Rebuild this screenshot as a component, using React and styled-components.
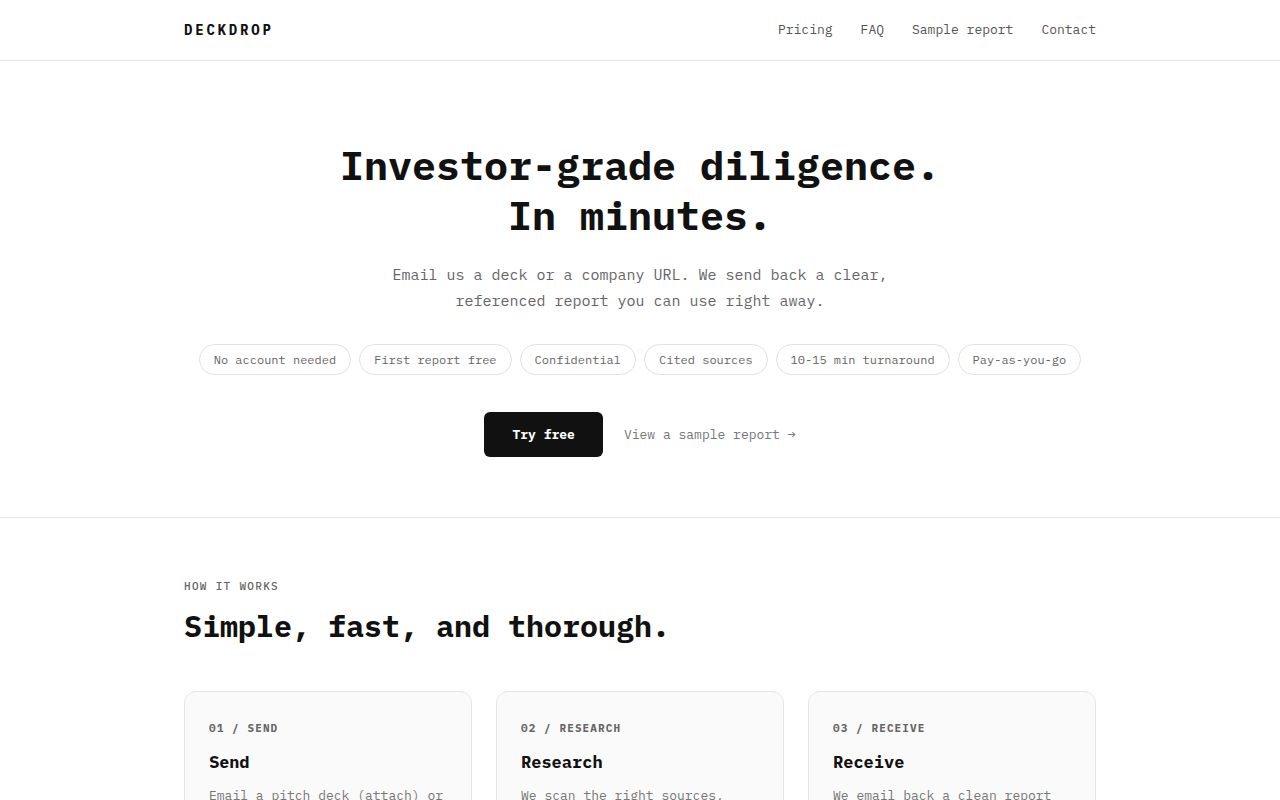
import React from "react";
import styled, { createGlobalStyle } from "styled-components";

const MONO = `"IBM Plex Mono", "DejaVu Sans Mono", "Liberation Mono", monospace`;
const SANS = `"IBM Plex Sans", "Noto Sans", "Open Sans", sans-serif`;

const GlobalStyle = createGlobalStyle`
  * { box-sizing: border-box; }
  body {
    margin: 0;
    background: #ffffff;
    color: #111111;
    font-family: ${MONO};
    -webkit-font-smoothing: antialiased;
  }
`;

const Page = styled.div`
  display: flex;
  flex-direction: column;
  width: 100%;
`;

const Container = styled.div`
  width: 912px;
  margin: 0 auto;
`;

const Header = styled.header`
  border-bottom: 1px solid #e6e6e6;
`;

const NavBar = styled(Container)`
  height: 60px;
  display: flex;
  align-items: center;
  justify-content: space-between;
  padding-bottom: 1px;
`;

const Logo = styled.div`
  font-size: 14px;
  font-weight: 700;
  letter-spacing: 0.2em;
  color: #111111;
`;

const NavLinks = styled.nav`
  display: flex;
  gap: 28px;
`;

const NavLink = styled.a`
  font-size: 13px;
  color: #555555;
  text-decoration: none;
`;

const Hero = styled.section`
  display: flex;
  flex-direction: column;
  align-items: center;
  padding: 79px 0 60px;
  border-bottom: 1px solid #e6e6e6;
`;

const Title = styled.h1`
  margin: 0;
  font-size: 40px;
  line-height: 50px;
  font-weight: 700;
  text-align: center;
  color: #111111;
`;

const Lead = styled.p`
  margin: 22px 0 0;
  font-size: 15px;
  line-height: 26px;
  color: #666666;
  text-align: center;
`;

const Pills = styled.div`
  display: flex;
  gap: 8px;
  margin-top: 30px;
`;

const Pill = styled.span`
  display: inline-flex;
  align-items: center;
  height: 31px;
  padding: 0 14px 1px;
  border: 1px solid #e2e2e2;
  border-radius: 999px;
  font-size: 12px;
  color: #666666;
`;

const Actions = styled.div`
  display: flex;
  align-items: center;
  gap: 21px;
  margin-top: 37px;
`;

const PrimaryBtn = styled.button`
  height: 45px;
  padding: 0 28px;
  border: none;
  border-radius: 6px;
  background: #111111;
  color: #ffffff;
  font-family: ${MONO};
  font-size: 13px;
  font-weight: 700;
`;

const TextLink = styled.a`
  font-size: 13px;
  color: #777777;
  text-decoration: none;
`;

const Section = styled.section`
  padding: 60px 0 40px;
`;

const Eyebrow = styled.div`
  font-size: 11px;
  line-height: 16px;
  font-weight: 500;
  letter-spacing: 0.12em;
  color: #666666;
`;

const SectionTitle = styled.h2`
  margin: 14px 0 0;
  font-size: 30px;
  line-height: 36px;
  font-weight: 700;
  color: #111111;
`;

const Steps = styled.div`
  display: grid;
  grid-template-columns: repeat(3, 1fr);
  gap: 24px;
  margin-top: 47px;
`;

const Card = styled.div`
  background: #fafafa;
  border: 1px solid #e4e4e4;
  border-radius: 12px;
  padding: 28px 24px;
  min-height: 200px;
`;

const StepLabel = styled.div`
  font-size: 11px;
  line-height: 16px;
  font-weight: 700;
  letter-spacing: 0.1em;
  color: #666666;
`;

const StepTitle = styled.h3`
  margin: 14px 0 0;
  font-family: ${(p) => (p.$sans ? SANS : MONO)};
  font-size: 17px;
  line-height: 24px;
  font-weight: 700;
  color: #111111;
`;

const StepText = styled.p`
  margin: 12px 0 0;
  font-size: 13px;
  line-height: 20px;
  color: #777777;
`;

const pills = [
  "No account needed",
  "First report free",
  "Confidential",
  "Cited sources",
  "10-15 min turnaround",
  "Pay-as-you-go",
];

const steps = [
  {
    label: "01 / SEND",
    title: "Send",
    text: "Email a pitch deck (attach) or a company URL to our inbox.",
    sans: true,
  },
  {
    label: "02 / RESEARCH",
    title: "Research",
    text: "We scan the right sources, check claims and cite them.",
  },
  {
    label: "03 / RECEIVE",
    title: "Receive",
    text: "We email back a clean report you can share with your team.",
  },
];

export default function App() {
  return (
    <Page>
      <GlobalStyle />
      <Header>
        <NavBar>
          <Logo>DECKDROP</Logo>
          <NavLinks>
            <NavLink href="#">Pricing</NavLink>
            <NavLink href="#">FAQ</NavLink>
            <NavLink href="#">Sample report</NavLink>
            <NavLink href="#">Contact</NavLink>
          </NavLinks>
        </NavBar>
      </Header>

      <Hero>
        <Title>
          Investor-grade diligence.
          <br />
          In minutes.
        </Title>
        <Lead>
          Email us a deck or a company URL. We send back a clear,
          <br />
          referenced report you can use right away.
        </Lead>
        <Pills>
          {pills.map((p) => (
            <Pill key={p}>{p}</Pill>
          ))}
        </Pills>
        <Actions>
          <PrimaryBtn>Try free</PrimaryBtn>
          <TextLink href="#">View a sample report →</TextLink>
        </Actions>
      </Hero>

      <Section>
        <Container>
          <Eyebrow>HOW IT WORKS</Eyebrow>
          <SectionTitle>Simple, fast, and thorough.</SectionTitle>
          <Steps>
            {steps.map((s) => (
              <Card key={s.label}>
                <StepLabel>{s.label}</StepLabel>
                <StepTitle $sans={s.sans}>{s.title}</StepTitle>
                <StepText>{s.text}</StepText>
              </Card>
            ))}
          </Steps>
        </Container>
      </Section>
    </Page>
  );
}
